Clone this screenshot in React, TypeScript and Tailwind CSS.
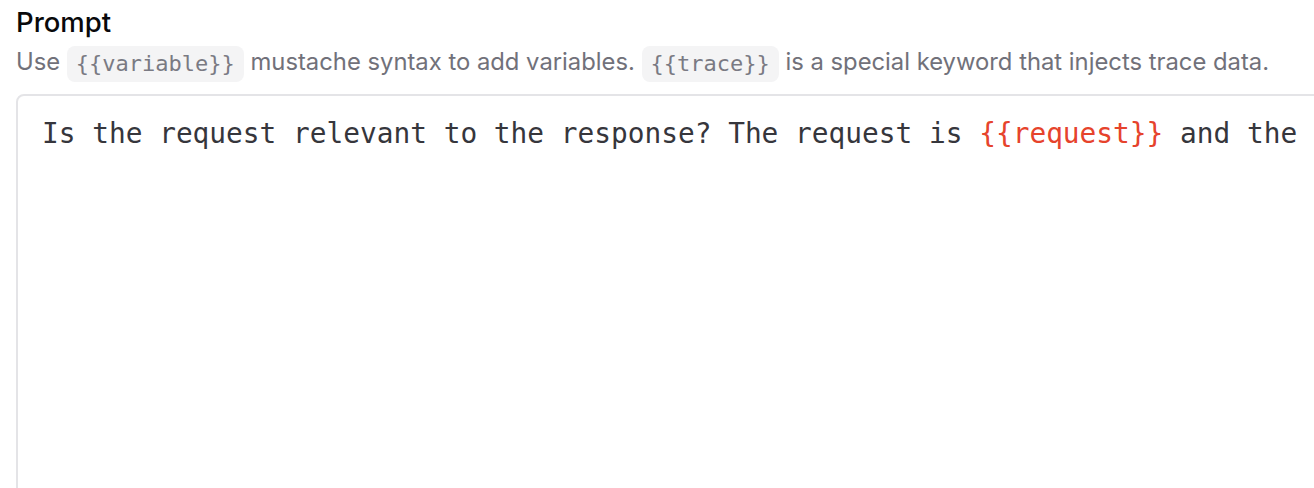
import React from 'react';

const Chip: React.FC<{ children: React.ReactNode }> = ({ children }) => (
  <code className="inline-block rounded-lg bg-[#f4f4f5] px-[9px] leading-[36px] text-[22px] text-[#7a7a83] font-['DejaVu_Sans_Mono',monospace] align-middle">
    {children}
  </code>
);

export default function App() {
  return (
    <div className="w-[1314px] h-[488px] overflow-hidden bg-white pl-4 pt-[4px] font-['Inter',sans-serif]">
      <h2 className="text-[27.5px] leading-[36px] font-medium text-[#09090b]">Prompt</h2>
      <p className="mt-[2px] text-[23.8px] leading-[40px] text-[#71717a] whitespace-nowrap">
        Use <Chip>{'{{variable}}'}</Chip> mustache syntax to add variables. <Chip>{'{{trace}}'}</Chip> is a
        special keyword that injects trace data.
      </p>
      <div className="mt-[12px] w-[1400px] h-[420px] rounded-lg border-2 border-[#e4e4e7] px-6 pt-[18px]">
        <div className="text-[27.8px] leading-[40px] text-[#36363c] whitespace-nowrap font-['DejaVu_Sans_Mono',monospace]">
          Is the request relevant to the response? The request is{' '}
          <span className="text-[#e6432c]">{'{{request}}'}</span> and the
        </div>
      </div>
    </div>
  );
}
